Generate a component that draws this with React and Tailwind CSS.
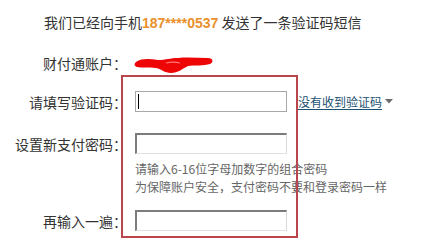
import React from "react";

const cjk = { fontFamily: '"Noto Sans CJK SC", "Noto Sans", sans-serif' };

function Box({ variant, cursor }) {
  if (variant === "light") {
    return (
      <div className="relative w-[152px] h-[21px] border border-solid border-[#a8a8a8] bg-white">
        {cursor && <span className="absolute left-[2px] top-[2px] w-[1px] h-[15px] bg-black" />}
      </div>
    );
  }
  return (
    <div className="w-[152px] h-[21px] border-solid border-t-2 border-l-2 border-r border-b border-t-[#7c7c7c] border-l-[#7c7c7c] border-r-[#d9d9d9] border-b-[#e2e2e2] bg-white" />
  );
}

export default function App() {
  return (
    <div className="relative w-[425px] h-[241px] bg-white overflow-hidden text-[#333]" style={cjk}>
      <div className="pt-[12px] pl-[44px] text-[14px] leading-[20px] whitespace-nowrap">
        我们已经向手机
        <span className="font-bold text-[#e8912d]" style={{ fontFamily: '"Liberation Sans", Arial, sans-serif' }}>
          187****0537
        </span>{" "}
        发送了一条验证码短信
      </div>

      <div className="mt-[20px] flex items-center h-[20px] text-[14px] leading-[20px]">
        <div className="w-[127px] text-right whitespace-nowrap">财付通账户：</div>
      </div>

      <div className="mt-[18px] flex items-center text-[14px] leading-[20px]">
        <div className="w-[127px] text-right whitespace-nowrap">请填写验证码：</div>
        <div className="ml-[8px]">
          <Box variant="light" cursor />
        </div>
        <a className="ml-[11px] text-[12px] leading-[16px] text-[#1c5070] underline underline-offset-2 whitespace-nowrap flex items-center">
          没有收到验证码
        </a>
        <svg className="ml-[3px] mt-[-1px]" width="8" height="5" viewBox="0 0 8 5">
          <polygon points="0,0 8,0 4,4.5" fill="#6b6b6b" />
        </svg>
      </div>

      <div className="mt-[21px] flex items-center text-[14px] leading-[20px]">
        <div className="w-[127px] text-right whitespace-nowrap">设置新支付密码：</div>
        <div className="ml-[8px]">
          <Box />
        </div>
      </div>

      <div className="mt-[6px] pl-[135px] text-[12px] leading-[18px] text-[#666] whitespace-nowrap">
        <div>请输入6-16位字母加数字的组合密码</div>
        <div>为保障账户安全，支付密码不要和登录密码一样</div>
      </div>

      <div className="mt-[14px] flex items-center text-[14px] leading-[20px]">
        <div className="w-[127px] text-right whitespace-nowrap">再输入一遍：</div>
        <div className="ml-[8px]">
          <Box />
        </div>
      </div>

      <svg className="absolute left-[134px] top-[56px]" width="80" height="18" viewBox="0 0 80 18">
        <path
          d="M2 6 C8 2 16 3 24 4 C32 4 36 2 44 2 C54 1 64 2 74 2 C79 2 80 6 76 8 C70 10 60 9 54 10 C48 13 44 17 37 17 C30 17 28 13 22 12 C14 11 8 12 3 11 C0 10 0 8 2 6 Z"
          fill="#ee0505"
        />
        <path d="M32 7 C36 6 42 6 46 7" stroke="#ff7777" strokeWidth="1.2" fill="none" />
      </svg>

      <div className="absolute left-[121px] top-[75px] w-[177px] h-[163px] border-2 border-solid border-[#b9464c]" />
    </div>
  );
}
